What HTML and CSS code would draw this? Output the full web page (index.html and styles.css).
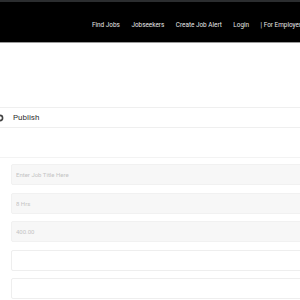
FILE: index.html
```html
<!DOCTYPE html>
<html lang="en">
<head>
    <meta charset="UTF-8">
    <meta name="viewport" content="width=device-width, initial-scale=1.0">
    <title>Post a Job</title>
    <link rel="stylesheet" href="styles.css">
</head>
<body>
    <header class="topbar">
        <nav class="nav">
            <a href="#">Find Jobs</a>
            <a href="#">Jobseekers</a>
            <a href="#">Create Job Alert</a>
            <a href="#">Login</a>
            <a href="#">| For Employers</a>
        </nav>
    </header>

    <div class="publish-bar">
        <svg class="publish-icon" width="8" height="8" viewBox="0 0 8 8">
            <circle cx="4" cy="4" r="2.6" fill="none" stroke="#444" stroke-width="1.6"/>
        </svg>
        <span>Publish</span>
    </div>

    <section class="job-form">
        <input type="text" class="field filled" placeholder="Enter Job Title Here">
        <input type="text" class="field filled" placeholder="8 Hrs">
        <input type="text" class="field filled" placeholder="400.00">
        <input type="text" class="field">
        <input type="text" class="field">
    </section>
</body>
</html>
```

FILE: styles.css
```css
html, body {
    margin: 0;
    padding: 0;
    background: #fff;
    font-family: Roboto, "Liberation Sans", Arial, sans-serif;
    overflow: hidden;
}

.topbar {
    background: #000;
    border-top: 2px solid #2b2d2f;
    border-bottom: 1px solid #9a9a9a;
    height: 40px;
    display: flex;
    align-items: center;
}

.nav {
    display: flex;
    gap: 11.5px;
    padding-left: 92px;
    padding-top: 5px;
    white-space: nowrap;
}

.nav a {
    color: #e8e8e8;
    text-decoration: none;
    font-size: 6.4px;
}

.publish-bar {
    margin-top: 64px;
    height: 19px;
    border-top: 1px solid #efefef;
    border-bottom: 1px solid #efefef;
    display: flex;
    align-items: center;
    font-size: 8px;
    color: #333;
}

.publish-icon {
    margin-left: -4px;
    margin-right: 9px;
}

.job-form {
    margin-top: 29px;
    border-top: 1px solid #f3f3f3;
    padding: 6px 0 0 11px;
    display: flex;
    flex-direction: column;
    gap: 7.5px;
}

.field {
    box-sizing: border-box;
    height: 21px;
    width: 300px;
    border: 1px solid #eeeeee;
    border-radius: 2px;
    background: #fff;
    padding: 0 4px;
    font-family: inherit;
    font-size: 6px;
    outline: none;
}

.field.filled {
    background: #f7f7f7;
    border-color: #f1f1f1;
}

.field::placeholder {
    color: #c4c4c4;
}
```
